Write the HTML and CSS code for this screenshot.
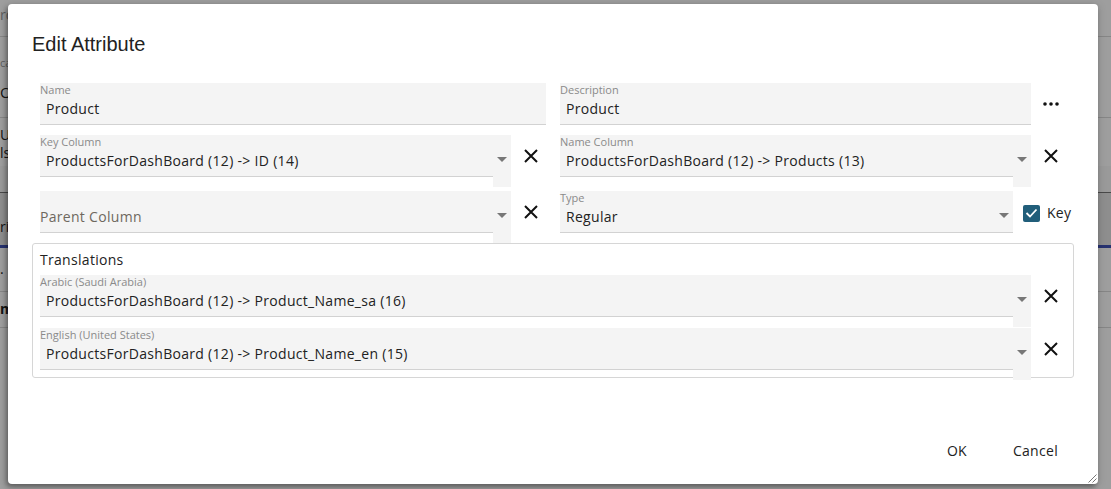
FILE: index.html
```html
<!DOCTYPE html>
<html>
<head>
<meta charset="utf-8">
<link rel="stylesheet" href="styles.css">
</head>
<body>
<div class="page">
  <div class="bg-row bg-r1"><span class="bg-text light">rc</span></div>
  <div class="bg-row bg-r2">
    <span class="bg-small">ca</span>
    <span class="bg-big">O</span>
  </div>
  <div class="bg-row bg-r3">
    <span class="bg-mid">U</span>
    <span class="bg-mid">ls</span>
  </div>
  <div class="bg-row bg-r4"></div>
  <div class="bg-row bg-r5"><span class="bg-mid">ri</span></div>
  <div class="bg-row bg-r6"><span class="bg-mid">.</span></div>
  <div class="bg-row bg-r7"><span class="bg-mid bold">m</span></div>
</div>
<div class="overlay"></div>

<div class="dialog">
  <h1 class="title">Edit Attribute</h1>
  <div class="form">
    <div class="row row-top">
      <div class="field field-name">
        <div class="lbl">Name</div>
        <div class="val">Product</div>
      </div>
      <div class="field field-desc">
        <div class="lbl">Description</div>
        <div class="val">Product</div>
      </div>
      <div class="more">
        <svg width="16" height="4" viewBox="0 0 16 4"><circle cx="2" cy="2" r="1.8"/><circle cx="8" cy="2" r="1.8"/><circle cx="14" cy="2" r="1.8"/></svg>
      </div>
    </div>

    <div class="row row-sel">
      <div class="half">
        <div class="select">
          <div class="sel-main">
            <div class="lbl">Key Column</div>
            <div class="val">ProductsForDashBoard (12) -&gt; ID (14)</div>
          </div>
          <div class="sel-arrow"><span class="caret"></span></div>
        </div>
        <div class="xbtn"><svg width="14" height="14" viewBox="0 0 14 14"><path d="M1 1 L13 13 M13 1 L1 13"/></svg></div>
      </div>
      <div class="half">
        <div class="select">
          <div class="sel-main">
            <div class="lbl">Name Column</div>
            <div class="val">ProductsForDashBoard (12) -&gt; Products (13)</div>
          </div>
          <div class="sel-arrow"><span class="caret"></span></div>
        </div>
        <div class="xbtn"><svg width="14" height="14" viewBox="0 0 14 14"><path d="M1 1 L13 13 M13 1 L1 13"/></svg></div>
      </div>
    </div>

    <div class="row row-sel row-third">
      <div class="half">
        <div class="select">
          <div class="sel-main">
            <div class="lbl"></div>
            <div class="placeholder">Parent Column</div>
          </div>
          <div class="sel-arrow"><span class="caret"></span></div>
        </div>
        <div class="xbtn"><svg width="14" height="14" viewBox="0 0 14 14"><path d="M1 1 L13 13 M13 1 L1 13"/></svg></div>
      </div>
      <div class="half">
        <div class="select select-type">
          <div class="sel-main">
            <div class="lbl">Type</div>
            <div class="val">Regular</div>
          </div>
          <div class="sel-arrow short"><span class="caret"></span></div>
        </div>
        <label class="check">
          <span class="box"><svg width="13" height="10" viewBox="0 0 13 10"><path d="M1.5 5 L5 8.5 L11.5 1.5"/></svg></span>
          <span class="check-text">Key</span>
        </label>
      </div>
    </div>

    <div class="translations">
      <div class="tr-title">Translations</div>
      <div class="tr-row">
        <div class="select">
          <div class="sel-main">
            <div class="lbl">Arabic (Saudi Arabia)</div>
            <div class="val">ProductsForDashBoard (12) -&gt; Product_Name_sa (16)</div>
          </div>
          <div class="sel-arrow"><span class="caret"></span></div>
        </div>
        <div class="xbtn"><svg width="14" height="14" viewBox="0 0 14 14"><path d="M1 1 L13 13 M13 1 L1 13"/></svg></div>
      </div>
      <div class="tr-row">
        <div class="select">
          <div class="sel-main">
            <div class="lbl">English (United States)</div>
            <div class="val">ProductsForDashBoard (12) -&gt; Product_Name_en (15)</div>
          </div>
          <div class="sel-arrow"><span class="caret"></span></div>
        </div>
        <div class="xbtn"><svg width="14" height="14" viewBox="0 0 14 14"><path d="M1 1 L13 13 M13 1 L1 13"/></svg></div>
      </div>
    </div>
  </div>

  <div class="footer">
    <button class="btn">OK</button>
    <button class="btn">Cancel</button>
  </div>
  <svg class="resize" width="9" height="9" viewBox="0 0 9 9"><path d="M8.5 0.5 L0.5 8.5 M8.5 4.5 L4.5 8.5"/></svg>
</div>
</body>
</html>
```

FILE: styles.css
```css
* { box-sizing: border-box; }
html, body { margin: 0; padding: 0; }
body {
  width: 1111px;
  height: 489px;
  overflow: hidden;
  position: relative;
  background: #fff;
  font-family: "Open Sans", "Liberation Sans", sans-serif;
  color: #222;
}

/* background page (seen only at the dialog's edges) */
.page { display: flex; flex-direction: column; }
.bg-row { display: flex; flex-direction: column; border-bottom: 1px solid #d8d8d8; white-space: nowrap; padding-left: 0; }
.bg-r1 { height: 37px; padding-top: 6px; }
.light { font-size: 14px; line-height: 18px; color: #999; }
.bg-r2 { height: 81px; padding-top: 19px; }
.bg-small { font-size: 11px; line-height: 14px; color: #999; }
.bg-big { font-size: 15px; line-height: 20px; margin-top: 12px; color: #222; }
.bg-r3 { height: 48px; padding-top: 8px; border-bottom: none; }
.bg-mid { font-size: 14px; line-height: 18px; color: #222; }
.bg-r4 { height: 27px; background: #f9f9f9; border-bottom: 1px solid #777; }
.bg-r5 { height: 55px; background: #e6e6e6; padding-top: 25px; border-bottom: 3px solid #3f51b5; }
.bg-r6 { height: 44px; padding-top: 12px; }
.bg-r7 { height: 36px; padding-top: 8px; }
.bold { font-weight: 700; }

.overlay {
  position: absolute;
  inset: 0;
  background: rgba(0, 0, 0, 0.38);
}

/* dialog */
.dialog {
  position: absolute;
  left: 8px;
  top: 4px;
  width: 1090px;
  height: 480px;
  background: #fff;
  border-radius: 4px;
  box-shadow: -2px 3px 5px rgba(0, 0, 0, 0.35), 0 1px 10px rgba(0, 0, 0, 0.15);
  display: flex;
  flex-direction: column;
}
.title {
  margin: 0;
  padding: 28px 24px 0 24px;
  font-family: "Liberation Sans", Arial, sans-serif;
  font-weight: 400;
  font-size: 20px;
  line-height: 24px;
  color: #222;
}
.form {
  padding: 0 32px;
  margin-top: 27px;
  display: flex;
  flex-direction: column;
}
.row { display: flex; align-items: flex-start; }
.row-top { height: 42px; }
.row-sel { margin-top: 10px; height: 52px; gap: 14px; }
.row-third { margin-top: 4px; }

.field {
  height: 42px;
  background: #f4f4f4;
  border-bottom: 1px solid #d2d2d2;
}
.field-name { width: 506px; }
.field-desc { width: 471px; margin-left: 14px; }
.more {
  width: 35px;
  height: 42px;
  display: flex;
  align-items: center;
  justify-content: flex-start;
  padding-left: 12px;
}
.more svg { fill: #111; }

.lbl {
  height: 14px;
  font-size: 11px;
  line-height: 14px;
  color: #8a8a8a;
}
.val {
  margin-top: 2px;
  padding-left: 6px;
  font-size: 14px;
  line-height: 20px;
  letter-spacing: 0.3px;
  color: #222;
  white-space: nowrap;
}
.placeholder {
  margin-top: 2px;
  font-size: 14px;
  line-height: 20px;
  letter-spacing: 0.3px;
  color: #6e685e;
}

.half { width: 506px; display: flex; align-items: flex-start; }
.select { width: 471px; flex-shrink: 0; display: flex; align-items: flex-start; }
.select-type { width: 453px; }
.sel-main {
  flex: 1;
  height: 42px;
  background: #f4f4f4;
  border-bottom: 1px solid #d2d2d2;
}
.sel-arrow {
  width: 18px;
  height: 52px;
  background: #f4f4f4;
  display: flex;
  justify-content: center;
  padding-top: 22px;
}
.sel-arrow.short { height: 42px; border-bottom: 1px solid #d2d2d2; }
.caret {
  width: 0;
  height: 0;
  border-top: 5px solid #777;
  border-left: 5px solid transparent;
  border-right: 5px solid transparent;
}
.xbtn {
  width: 35px;
  flex-shrink: 0;
  height: 42px;
  padding-left: 13px;
  padding-top: 14px;
}
.xbtn svg { display: block; stroke: #111; stroke-width: 2; fill: none; }

.check {
  display: flex;
  align-items: center;
  margin-left: 10px;
  margin-top: 12px;
  gap: 7px;
  flex-shrink: 0;
}
.box {
  width: 17px;
  height: 17px;
  border-radius: 2px;
  background: #215e7a;
  display: flex;
  align-items: center;
  justify-content: center;
}
.box svg { stroke: #fff; stroke-width: 1.8; fill: none; }
.check-text { font-size: 14px; line-height: 20px; letter-spacing: 0.3px; color: #222; }

.translations {
  margin: 0 -8px;
  height: 135px;
  border: 1px solid #d6d6d6;
  border-radius: 3px;
  padding: 0 7px;
}
.tr-title {
  padding-top: 6px;
  font-size: 14px;
  line-height: 20px;
  letter-spacing: 0.3px;
  color: #222;
  height: 31px;
}
.tr-row { display: flex; align-items: flex-start; height: 53px; }
.tr-row .select { width: 991px; }

.footer {
  margin-top: auto;
  display: flex;
  justify-content: flex-end;
  gap: 8px;
  padding: 0 24px 16px 0;
}
.btn {
  min-width: 64px;
  height: 36px;
  padding: 0 16px;
  border: none;
  background: transparent;
  font-family: "Open Sans", "Liberation Sans", sans-serif;
  font-size: 14px;
  letter-spacing: 0.3px;
  color: #222;
}
.resize {
  position: absolute;
  right: 1px;
  bottom: 1px;
  stroke: #777;
  stroke-width: 1;
  fill: none;
}
```
